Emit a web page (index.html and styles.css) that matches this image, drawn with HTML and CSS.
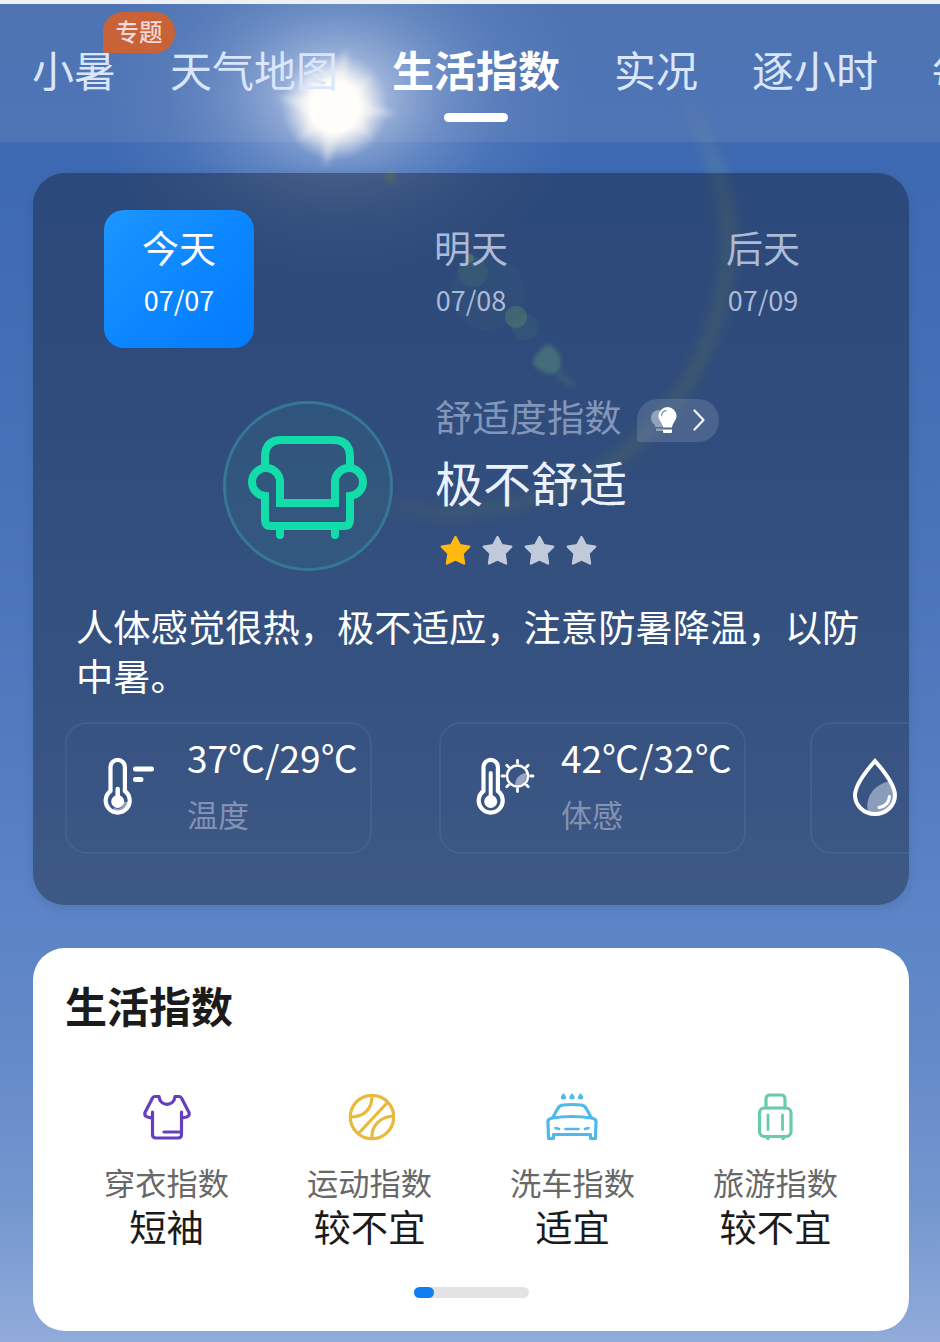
FILE: index.html
```html
<!DOCTYPE html>
<html lang="zh-CN">
<head>
    <meta charset="UTF-8">
    <meta name="viewport" content="width=device-width, initial-scale=1.0">
    <title>生活指数</title>
    <link rel="stylesheet" href="styles.css">
</head>
<body>

    <!-- sky with sun and lens flare -->
    <svg class="sky" viewBox="0 0 940 1342" aria-hidden="true" color-interpolation-filters="sRGB">
        <defs>
            <radialGradient id="glow">
                <stop offset="0" stop-color="#e4ecf8" stop-opacity=".9"/>
                <stop offset=".2" stop-color="#c3d2ec" stop-opacity=".65"/>
                <stop offset=".45" stop-color="#9cb5de" stop-opacity=".38"/>
                <stop offset=".7" stop-color="#86a4d4" stop-opacity=".16"/>
                <stop offset="1" stop-color="#7898cc" stop-opacity="0"/>
            </radialGradient>
            <radialGradient id="sun">
                <stop offset="0" stop-color="#fff"/>
                <stop offset=".45" stop-color="#fffefa"/>
                <stop offset=".65" stop-color="#faf8f4" stop-opacity=".65"/>
                <stop offset="1" stop-color="#dfe6f2" stop-opacity="0"/>
            </radialGradient>
            <linearGradient id="ring" x1="0" y1="0" x2="1" y2="0">
                <stop offset="0" stop-color="#7fa08c" stop-opacity="0"/>
                <stop offset=".3" stop-color="#7fa08c" stop-opacity=".28"/>
                <stop offset="1" stop-color="#7fa08c" stop-opacity=".4"/>
            </linearGradient>
            <linearGradient id="ring-top" x1="0" y1="0" x2="0" y2="1">
                <stop offset="0" stop-color="#000"/>
                <stop offset=".3" stop-color="#fff"/>
            </linearGradient>
            <mask id="ring-fade" maskUnits="userSpaceOnUse" x="300" y="80" width="500" height="480">
                <rect x="300" y="80" width="500" height="480" fill="url(#ring-top)"/>
            </mask>
            <filter id="soft" x="-30%" y="-30%" width="160%" height="160%"><feGaussianBlur stdDeviation="6"/></filter>
            <filter id="rays" x="-30%" y="-30%" width="160%" height="160%"><feGaussianBlur stdDeviation="3"/></filter>
            <filter id="edge" x="-30%" y="-30%" width="160%" height="160%"><feGaussianBlur stdDeviation="2"/></filter>
        </defs>
        <rect width="940" height="142" fill="#8296be" fill-opacity=".26"/>
        <ellipse cx="338" cy="95" rx="245" ry="190" fill="url(#glow)"/>
        <g mask="url(#ring-fade)">
            <path d="M685 95C718 160 728 200 728 240C726 400 600 512 445 512C410 511 370 504 320 488" fill="none" stroke="url(#ring)" stroke-width="15" filter="url(#soft)"/>
        </g>
        <path d="M347 48L347 90L373 76L356 100L398 114L358 117L372 136L343 126L325 168L322 128L298 140L314 114L276 97L312 96L304 76L326 88Z" fill="#f6f5f2" opacity=".5" filter="url(#rays)"/>
        <circle cx="335" cy="107" r="54" fill="url(#sun)"/>
        <g fill="#6fae9e">
            <circle cx="390" cy="177" r="6" fill="#84a47c" opacity=".5" filter="url(#edge)"/>
            <circle cx="470" cy="258" r="4" fill="#8cc090" opacity=".65"/>
            <circle cx="473" cy="272" r="15" opacity=".27"/>
            <circle cx="487" cy="293" r="37" opacity=".1"/>
            <circle cx="516" cy="317" r="11" opacity=".65"/>
            <circle cx="525" cy="327" r="13" opacity=".2"/>
            <path d="M549 344Q562 352 561 364Q560 375 549 374Q533 369 533 361Q539 348 549 344Z" fill="#74b4b4" opacity=".75" filter="url(#edge)"/>
            <path d="M560 370L577 383L572 388L554 378Z" opacity=".3" filter="url(#edge)"/>
        </g>
    </svg>

    <header class="topbar">
        <nav class="tabs">
            <a class="tab">小暑<span class="tab-badge">专题</span></a>
            <a class="tab">天气地图</a>
            <a class="tab active">生活指数</a>
            <a class="tab">实况</a>
            <a class="tab">逐小时</a>
            <a class="tab">每</a>
        </nav>
    </header>

    <main class="content">
        <section class="comfort-card">
            <div class="days">
                <div class="day selected">
                    <span class="day-name">今天</span>
                    <span class="day-date">07/07</span>
                </div>
                <div class="day">
                    <span class="day-name">明天</span>
                    <span class="day-date">07/08</span>
                </div>
                <div class="day">
                    <span class="day-name">后天</span>
                    <span class="day-date">07/09</span>
                </div>
            </div>

            <div class="comfort">
                <div class="comfort-icon">
                    <svg width="120" height="106" viewBox="0 -2 120 106" fill="none" stroke="#13dcab" stroke-width="8">
                        <path d="M17 33V22Q17 5 34 5H85Q102 5 102 22V33"/>
                        <path d="M17 61V85Q17 91 23 91H96Q102 91 102 85V61A14 14 0 1 0 87 48V68H32V48A14 14 0 1 0 17 61Z"/>
                        <path d="M32 94V100M87 94V100" stroke-linecap="round"/>
                    </svg>
                </div>
                <div class="comfort-text">
                    <div class="comfort-head">
                        <span class="comfort-title">舒适度指数</span>
                        <span class="tip">
                            <svg width="28" height="28" viewBox="0 0 28 28">
                                <g fill="#a9b8cb" opacity=".75">
                                    <circle cx="9" cy="12" r="8"/>
                                    <path d="M5 18h7v3H5zM6 22.500h7v2.500H6z"/>
                                </g>
                                <path d="M17.500 1a9 9 0 0 1 9 9c0 4-3.500 6-4.500 11.500h-9C12 16 8.500 14 8.500 10a9 9 0 0 1 9-9z" fill="#fff"/>
                                <path d="M13 23.500h9v2.500q0 1-1 1h-7q-1 0-1-1z" fill="#fff"/>
                                <path d="M11.500 9.500q.5-4 4.500-5" fill="none" stroke="#8795ab" stroke-width="1.300" stroke-linecap="round"/>
                            </svg>
                            <svg width="12" height="22" viewBox="0 0 12 22" fill="none" stroke="#f2f6fc" stroke-width="2.200" stroke-linecap="round" stroke-linejoin="round">
                                <path d="M1.500 1.500L10.500 11L1.500 20.500"/>
                            </svg>
                        </span>
                    </div>
                    <div class="comfort-level">极不舒适</div>
                    <div class="stars">
                        <svg class="star on" viewBox="0 0 31 31"><use href="#star"/></svg>
                        <svg class="star" viewBox="0 0 31 31"><use href="#star"/></svg>
                        <svg class="star" viewBox="0 0 31 31"><use href="#star"/></svg>
                        <svg class="star" viewBox="0 0 31 31"><use href="#star"/></svg>
                    </div>
                </div>
            </div>

            <p class="advice">人体感觉很热，极不适应，注意防暑降温，以防中暑。</p>

            <div class="metrics">
                <div class="metric">
                    <svg class="metric-icon" width="54" height="62" viewBox="0 0 54 62" fill="none" stroke="#fff" stroke-linecap="round">
                        <path d="M23 45a8.500 8.500 0 0 1-13 7.500" stroke="#97a5c1" stroke-width="4" stroke-linecap="butt"/>
                        <path d="M7.500 34V10a7.200 7.200 0 0 1 14.400 0V34a12 12 0 1 1-14.400 0z" stroke-width="4.200"/>
                        <circle cx="14.700" cy="44.500" r="6.500" fill="#fff" stroke="none"/>
                        <path d="M14.700 32V44" stroke-width="4.500"/>
                        <path d="M32.500 12H48.500M32.500 22.500H38" stroke-width="5"/>
                    </svg>
                    <div class="metric-text">
                        <span class="metric-value">37℃/29℃</span>
                        <span class="metric-label">温度</span>
                    </div>
                </div>
                <div class="metric">
                    <svg class="metric-icon" width="60" height="62" viewBox="0 0 60 62" fill="none" stroke="#fff" stroke-linecap="round">
                        <path d="M7.500 34V10a7.200 7.200 0 0 1 14.400 0V34a12 12 0 1 1-14.400 0z" stroke-width="4.200"/>
                        <circle cx="14.700" cy="44.500" r="6.500" fill="#fff" stroke="none"/>
                        <path d="M14.700 16V44" stroke-width="4"/>
                        <path d="M39 29C39 22 43 17 50 16A10.500 10.500 0 0 1 39 29z" fill="#97a5c1" stroke="none"/>
                        <circle cx="41.500" cy="19" r="10.500" stroke-width="2.500"/>
                        <path d="M41.500 3.500V6M41.500 32V34.500M26 19H28.500M54.500 19H57M30.800 8.300L32.500 10M50.500 28L52.200 29.700M52.200 8.300L50.500 10M32.500 28L30.800 29.700" stroke-width="2.800"/>
                    </svg>
                    <div class="metric-text">
                        <span class="metric-value">42℃/32℃</span>
                        <span class="metric-label">体感</span>
                    </div>
                </div>
                <div class="metric">
                    <svg class="metric-icon" width="48" height="62" viewBox="0 0 48 62" fill="none" stroke="#fff" stroke-linecap="round">
                        <path d="M17 55C14 41 22 27 40 24Q46 36 45 41C43 53 30 60 17 55z" fill="#8c9cbb" stroke="none"/>
                        <path d="M24 4Q43.500 26 44 38A20 19 0 0 1 4 38Q4.500 26 24 4z" stroke-width="4"/>
                        <path d="M38.500 39.500Q37.500 49 28 50.500" stroke-width="3"/>
                    </svg>
                </div>
            </div>
        </section>

        <section class="life-card">
            <h2>生活指数</h2>
            <div class="indices">
                <div class="index">
                    <svg width="52" height="52" viewBox="0 0 52 52" fill="none" stroke="#6440bf" stroke-width="3.200" stroke-linecap="round" stroke-linejoin="round">
                        <path d="M12.500 20V42.500Q12.500 46 16 46H38Q41.500 46 41.500 42.500V20"/>
                        <path d="M24 40H41"/>
                        <path d="M12 26L7.500 25Q4 24 5 20.500L12 7Q13 4.500 15 4.500H19C20 15 34 15 35 4.500H39Q41 4.500 42 7L49 20.500Q50 24 46.500 25L42 26"/>
                    </svg>
                    <span class="index-name">穿衣指数</span>
                    <span class="index-value">短袖</span>
                </div>
                <div class="index">
                    <svg width="52" height="52" viewBox="0 0 52 52" fill="none" stroke="#e9b93c" stroke-width="3.200">
                        <g transform="translate(3 -1)">
                            <circle cx="26" cy="26" r="21.700"/>
                            <path d="M12 43L41 12M5 26C18 26 26 18 26 5M26 47C25 35 34 26 47 25"/>
                        </g>
                    </svg>
                    <span class="index-name">运动指数</span>
                    <span class="index-value">较不宜</span>
                </div>
                <div class="index">
                    <svg width="52" height="52" viewBox="0 0 52 52" fill="none" stroke="#4fb9ea" stroke-width="3.200" stroke-linejoin="round" stroke-linecap="round">
                        <path d="M6.500 26L11.500 17Q13 13.500 17 13Q26 12 35 13Q39 13.500 40.500 17L45.500 26Q50.500 27 50 30L49.500 46.500H44.500V42.500H7.500V46.500H2.500L2 30Q1.500 27 6.500 26Q26 23 45.500 26"/>
                        <path d="M19.500 37H32.500M9.500 36L13 37M42.500 36L39 37" stroke-width="2.600"/>
                        <path d="M17.500 1Q23 7.500 17.500 7.500Q12 7.500 17.500 1M26 1Q31.500 7.500 26 7.500Q20.500 7.500 26 1M34.500 1Q40 7.500 34.500 7.500Q29 7.500 34.500 1" fill="#4fb9ea" stroke="none"/>
                    </svg>
                    <span class="index-name">洗车指数</span>
                    <span class="index-value">适宜</span>
                </div>
                <div class="index">
                    <svg width="52" height="52" viewBox="0 0 52 52" fill="none" stroke="#69cbad" stroke-width="3.200" stroke-linecap="round">
                        <rect x="10.500" y="16" width="31.500" height="28.500" rx="5"/>
                        <path d="M17 16V7Q17 3 21 3H32Q36 3 36 7V16"/>
                        <path d="M19 23V37.500M33.500 23V37.500" stroke-width="2.800"/>
                        <path d="M18 45.500L19 46.500M34 46.500L35 45.500"/>
                    </svg>
                    <span class="index-name">旅游指数</span>
                    <span class="index-value">较不宜</span>
                </div>
            </div>
            <div class="pager"><span class="pager-thumb"></span></div>
        </section>
    </main>

    <svg class="symbols" aria-hidden="true">
        <symbol id="star" viewBox="0 0 31 31">
            <path d="M15.500 2L19.800 10.300L29.200 11.700L22.500 18.500L24 28.500L15.500 24.500L7 28.500L8.500 18.500L1.800 11.700L11.200 10.300Z" stroke="currentColor" stroke-width="2.400" stroke-linejoin="round" fill="currentColor"/>
        </symbol>
    </svg>

</body>
</html>
```
FILE: styles.css
```css
* {
    box-sizing: border-box;
}

body {
    margin: 0;
    width: 940px;
    height: 1342px;
    overflow: hidden;
    position: relative;
    font-family: "Noto Sans CJK SC", sans-serif;
    color: #fff;
    background: linear-gradient(180deg, #3c68b1 0, #3e6ab3 170px, #456fb6 400px, #5079be 700px, #5b83c5 905px, #6389c8 1040px, #7396ce 1200px, #91abda 1342px);
}

.sky {
    position: absolute;
    top: 0;
    left: 0;
    width: 940px;
    height: 1342px;
}

.symbols {
    display: none;
}

/* top tabs */
.topbar {
    position: relative;
    height: 142px;
    padding-top: 34px;
    border-top: 4px solid #edf1f5;
    overflow: hidden;
}

.tabs {
    display: flex;
    gap: 54px;
    padding-left: 32px;
    font-size: 42px;
    line-height: 62px;
    white-space: nowrap;
}

.tab {
    position: relative;
    color: #d9e6fc;
    flex-shrink: 0;
}

.tab.active {
    color: #fff;
    font-weight: bold;
}

.tab.active::after {
    content: "";
    display: block;
    width: 64px;
    height: 9px;
    margin: 13px auto 0;
    border-radius: 5px;
    background-color: #fff;
}

.tab-badge {
    position: absolute;
    top: -26px;
    left: 71px;
    width: 72px;
    height: 41px;
    border-radius: 20px 20px 20px 2px;
    background-color: #ca6237;
    color: #f3d9dc;
    font-size: 23.500px;
    font-weight: 500;
    line-height: 38px;
    text-align: center;
}

.content {
    position: relative;
    padding: 31px 31px 0 33px;
}

/* comfort card */
.comfort-card {
    height: 732px;
    padding-top: 37px;
    border-radius: 32px;
    background-color: rgba(12, 16, 24, 0.37);
    box-shadow: 0 2px 8px rgba(30, 50, 90, 0.15);
    overflow: hidden;
}

.days {
    display: grid;
    grid-template-columns: repeat(3, 1fr);
    justify-items: center;
}

.day {
    display: flex;
    flex-direction: column;
    align-items: center;
    width: 150px;
    height: 138px;
    padding-top: 9px;
    border-radius: 20px;
    color: #acbad6;
}

.day.selected {
    background: linear-gradient(135deg, #1c96ff, #0a84ff 60%, #037bff);
    color: #fff;
}

.day-name {
    font-size: 37px;
    line-height: 56px;
}

.day-date {
    font-size: 27px;
    line-height: 50px;
}

.comfort {
    display: flex;
    height: 184px;
    margin-top: 41px;
    padding-left: 190px;
}

.comfort-icon {
    display: flex;
    align-items: center;
    justify-content: center;
    width: 170px;
    height: 170px;
    margin: 12px 42px 0 0;
    border: 3px solid #357795;
    border-radius: 50%;
    background-color: rgba(55, 110, 130, 0.28);
}

.comfort-icon svg {
    overflow: visible;
}

.comfort-head {
    display: flex;
    align-items: center;
    gap: 16px;
    height: 54px;
}

.comfort-title {
    font-size: 37.300px;
    line-height: 54px;
    color: #8495ba;
}

.tip {
    display: flex;
    align-items: center;
    justify-content: space-between;
    width: 82px;
    height: 43px;
    margin-top: 8px;
    padding: 0 14px 0 13px;
    border-radius: 21px 21px 21px 3px;
    background-color: rgba(140, 155, 185, 0.3);
}

.comfort-level {
    margin-top: 2px;
    font-size: 48px;
    line-height: 72px;
    color: #ebf1ff;
}

.stars {
    display: flex;
    gap: 11px;
    margin: 18px 0 0 5px;
}

.star {
    width: 31px;
    height: 31px;
    color: #c1c9da;
}

.star.on {
    color: #ffb911;
}

.advice {
    margin: 29px 46px 0 43px;
    font-size: 37.300px;
    line-height: 48.500px;
}

/* metric boxes, the last one runs off the card */
.metrics {
    display: flex;
    gap: 67px;
    margin-top: 23px;
    padding-left: 32px;
}

.metric {
    display: flex;
    flex-shrink: 0;
    width: 307px;
    height: 132px;
    border: 2px solid rgba(130, 155, 205, 0.15);
    border-radius: 22px;
}

.metric:last-child {
    margin-left: -3px;
}

.metric-icon {
    flex-shrink: 0;
    margin: 33px 0 0 36px;
}

.metric:nth-child(2) .metric-icon {
    margin-left: 35px;
}

.metric:last-child .metric-icon {
    margin-left: 39px;
}

.metric-text {
    display: flex;
    flex-direction: column;
    margin-left: 30px;
    white-space: nowrap;
}

.metric:nth-child(2) .metric-text {
    margin-left: 25px;
}

.metric-value {
    padding-top: 5px;
    font-size: 37px;
    line-height: 56px;
}

.metric-label {
    font-size: 31px;
    line-height: 58px;
    color: #8391b2;
}

/* life indices card */
.life-card {
    height: 383px;
    margin-top: 43px;
    padding: 26px 32px 0 32px;
    border-radius: 32px;
    background-color: #fff;
    color: #1b1b1b;
}

h2 {
    margin: 0;
    font-size: 42px;
    line-height: 62px;
}

.indices {
    display: grid;
    grid-template-columns: repeat(4, 1fr);
    margin-top: 56px;
}

.index {
    display: flex;
    flex-direction: column;
    align-items: center;
}

.index svg {
    margin-left: -2px;
}

.index-name {
    margin-top: 16px;
    font-size: 31.200px;
    line-height: 44px;
    color: #686868;
}

.index-value {
    font-size: 37.300px;
    line-height: 44px;
}

.pager {
    width: 115px;
    height: 11px;
    margin: 39px auto 0;
    border-radius: 6px;
    background-color: #e3e3e3;
}

.pager-thumb {
    display: block;
    width: 20px;
    height: 11px;
    border-radius: 6px;
    background-color: #117df0;
}
```
